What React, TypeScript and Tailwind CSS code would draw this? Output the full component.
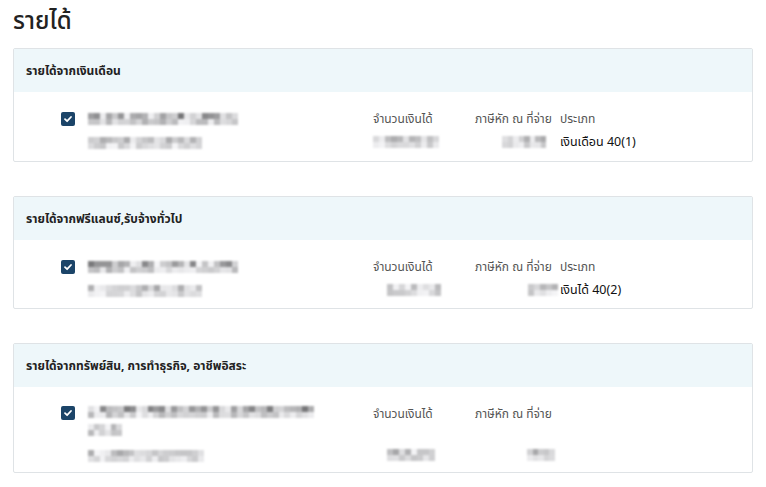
import React from "react";

function rand(seed: number) {
  let s = seed;
  return () => {
    s = (s * 9301 + 49297) % 233280;
    return s / 233280;
  };
}

function Blur({ width, seed, dark = false }: { width: number; seed: number; dark?: boolean }) {
  const r = rand(seed);
  const cols = Math.ceil(width / 6);
  const rows = [0, 1];
  return (
    <div className="flex flex-col blur-[0.8px]" style={{ width }}>
      {rows.map((row) => (
        <div key={row} className="flex h-[6px]">
          {Array.from({ length: cols }).map((_, i) => {
            const v = r();
            const base = row === 0 ? (dark ? 115 : 165) : dark ? 175 : 195;
            const c = Math.round(base + v * (245 - base));
            return <div key={i} className="w-[6px] h-[6px]" style={{ background: `rgb(${c},${c},${c + 2})` }} />;
          })}
        </div>
      ))}
    </div>
  );
}

function Check() {
  return (
    <div className="w-[14px] h-[14px] rounded-[2px] bg-[#1b4468] flex items-center justify-center shrink-0">
      <svg width="10" height="10" viewBox="0 0 10 10">
        <path d="M2 5.2 L4.1 7.2 L8 3" stroke="white" strokeWidth="1.8" fill="none" strokeLinecap="round" strokeLinejoin="round" />
      </svg>
    </div>
  );
}

function Card({ title, children }: { title: string; children: React.ReactNode }) {
  return (
    <div className="border border-[#dfe3e6] rounded-[2px] bg-white">
      <div className="h-[43px] bg-[#eef7fa] px-[12px] flex items-center text-[12px] font-bold text-[#222]">{title}</div>
      {children}
    </div>
  );
}

const label = "text-[12px] text-[#555] leading-[14px] whitespace-nowrap";

export default function App() {
  return (
    <div className="w-[766px] h-[487px] bg-white px-[13px] text-[#222]" style={{ fontFamily: '"Noto Sans", "Noto Sans Thai", Tahoma, sans-serif' }}>
      <h1 className="pt-[2px] h-[48px] text-[24px] leading-[36px] font-medium text-[#222]">รายได้</h1>
      <div className="flex flex-col gap-[34px]">
        <Card title="รายได้จากเงินเดือน">
          <div className="flex pl-[47px] pt-[20px] h-[69px]">
            <Check />
            <div className="ml-[13px] w-[285px] flex flex-col gap-[12px] pt-[1px]">
              <Blur width={150} seed={3} dark />
              <Blur width={114} seed={7} />
            </div>
            <div className="w-[102px] flex flex-col">
              <div className={label}>จำนวนเงินได้</div>
              <div className="mt-[10px]"><Blur width={66} seed={11} /></div>
            </div>
            <div className="w-[85px] flex flex-col">
              <div className={label}>ภาษีหัก ณ ที่จ่าย</div>
              <div className="mt-[10px] pl-[27px]"><Blur width={44} seed={13} /></div>
            </div>
            <div className="flex flex-col">
              <div className={label}>ประเภท</div>
              <div className="mt-[9px] text-[12.5px] leading-[14px] text-[#111]">เงินเดือน 40(1)</div>
            </div>
          </div>
        </Card>
        <Card title="รายได้จากฟรีแลนซ์,รับจ้างทั่วไป">
          <div className="flex pl-[47px] pt-[20px] h-[68px]">
            <Check />
            <div className="ml-[13px] w-[285px] flex flex-col gap-[12px] pt-[1px]">
              <Blur width={150} seed={21} dark />
              <Blur width={114} seed={23} />
            </div>
            <div className="w-[102px] flex flex-col">
              <div className={label}>จำนวนเงินได้</div>
              <div className="mt-[10px] pl-[14px]"><Blur width={54} seed={29} /></div>
            </div>
            <div className="w-[85px] flex flex-col">
              <div className={label}>ภาษีหัก ณ ที่จ่าย</div>
              <div className="mt-[10px] pl-[53px]"><Blur width={30} seed={31} /></div>
            </div>
            <div className="flex flex-col">
              <div className={label}>ประเภท</div>
              <div className="mt-[9px] text-[12.5px] leading-[14px] text-[#111]">เงินได้ 40(2)</div>
            </div>
          </div>
        </Card>
        <Card title="รายได้จากทรัพย์สิน, การทำธุรกิจ, อาชีพอิสระ">
          <div className="flex pl-[47px] pt-[19px] h-[85px]">
            <Check />
            <div className="ml-[13px] w-[285px] flex flex-col pt-[0px]">
              <Blur width={226} seed={41} dark />
              <div className="mt-[6px]"><Blur width={34} seed={43} dark /></div>
              <div className="mt-[14px]"><Blur width={116} seed={47} /></div>
            </div>
            <div className="w-[102px] flex flex-col">
              <div className={label + " mt-[1px]"}>จำนวนเงินได้</div>
              <div className="mt-[28px] pl-[14px]"><Blur width={48} seed={53} /></div>
            </div>
            <div className="w-[85px] flex flex-col">
              <div className={label + " mt-[1px]"}>ภาษีหัก ณ ที่จ่าย</div>
              <div className="mt-[28px] pl-[52px]"><Blur width={28} seed={59} /></div>
            </div>
          </div>
        </Card>
      </div>
    </div>
  );
}
